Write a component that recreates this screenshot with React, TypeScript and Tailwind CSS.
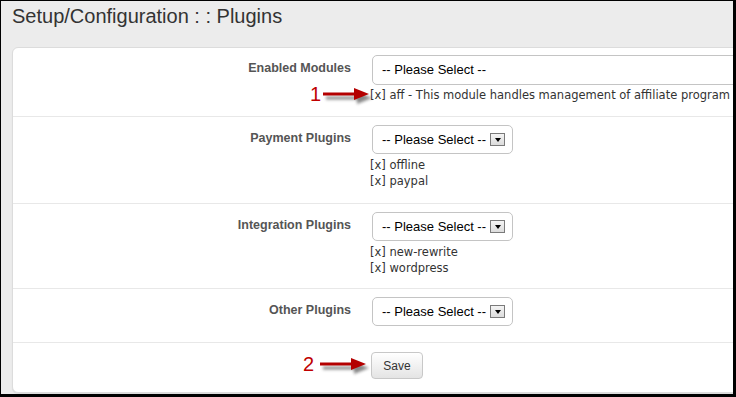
import React from 'react';

const Arrow: React.FC<{ className: string }> = ({ className }) => (
  <svg className={className} width="56" height="24" viewBox="0 0 56 24">
    <defs>
      <filter id="sh" x="-20%" y="-50%" width="160%" height="220%">
        <feGaussianBlur stdDeviation="1.6" />
      </filter>
    </defs>
    <g transform="translate(3,4)" fill="#555" opacity="0.7" filter="url(#sh)">
      <rect x="0" y="6.5" width="34" height="3" />
      <polygon points="31,2 46,8 31,14" />
    </g>
    <g fill="#b40000">
      <rect x="0" y="6.5" width="34" height="3" />
      <polygon points="31,2 46,8 31,14" />
    </g>
  </svg>
);

const DropBtn = () => (
  <span className="ml-[4px] flex h-[13px] w-[15px] items-center justify-center border border-[#7a7a7a] bg-gradient-to-b from-[#f4f4f4] to-[#dcdcdc]">
    <span className="h-0 w-0 border-x-[3.5px] border-t-[4px] border-x-transparent border-t-black" />
  </span>
);

const Select = ({ wide }: { wide?: boolean }) => (
  <div
    className={`flex items-center rounded-[5px] border border-[#c4c4c4] bg-white pl-[9px] text-[13px] text-black ${
      wide ? 'h-[30px] w-[420px]' : 'h-[29px] w-[141px]'
    }`}
  >
    <span>-- Please Select --</span>
    {!wide && <DropBtn />}
  </div>
);

const Label = ({ text }: { text: string }) => (
  <div className="mt-[5px] w-[338px] shrink-0 text-right text-[12.5px] font-bold leading-4 text-[#555]">{text}</div>
);

const Notes = ({ items, mt }: { items: string[]; mt: string }) => (
  <div className={`${mt} -ml-[2px] font-['DejaVu_Sans',sans-serif] text-[11.5px] leading-4 text-[#333]`}>
    {items.map((t) => (
      <div key={t}>[x] {t}</div>
    ))}
  </div>
);

export default function App() {
  return (
    <div className="relative h-[397px] w-[736px] overflow-hidden border-b-[3px] border-l border-r-[3px] border-t border-black bg-[#ececec] font-['Liberation_Sans',Arial,sans-serif]">
      <div className="pl-[11px] pt-[3px] text-[20px] leading-6 text-[#333]">Setup/Configuration : : Plugins</div>

      <div className="ml-[11px] mt-[19px] w-[800px] rounded-l-[6px] border border-[#dcdcdc] bg-white shadow-[0_1px_1px_rgba(0,0,0,0.08)]">
        <div className="flex border-b border-[#e8e8e8] pb-[13px] pt-[7px]">
          <Label text="Enabled Modules" />
          <div className="ml-[21px]">
            <Select wide />
            <Notes mt="mt-[2px]" items={['aff - This module handles management of affiliate program']} />
          </div>
        </div>

        <div className="flex border-b border-[#e8e8e8] pb-[14px] pt-[8px]">
          <Label text="Payment Plugins" />
          <div className="ml-[21px]">
            <Select />
            <Notes mt="mt-[3px]" items={['offline', 'paypal']} />
          </div>
        </div>

        <div className="flex border-b border-[#e8e8e8] pb-[12px] pt-[8px]">
          <Label text="Integration Plugins" />
          <div className="ml-[21px]">
            <Select />
            <Notes mt="mt-[3px]" items={['new-rewrite', 'wordpress']} />
          </div>
        </div>

        <div className="flex border-b border-[#e8e8e8] pb-[16px] pt-[8px]">
          <Label text="Other Plugins" />
          <div className="ml-[21px]">
            <Select />
          </div>
        </div>

        <div className="flex pb-[13px] pt-[9px]">
          <div className="w-[338px] shrink-0" />
          <button className="ml-[20px] h-[27px] w-[52px] rounded-[4px] border border-[#c8c8c8] bg-gradient-to-b from-white to-[#e4e4e4] text-[12px] text-[#333]">
            Save
          </button>
        </div>
      </div>

      {/* annotations */}
      <div className="absolute left-[309px] top-[81px] text-[20px] leading-6 text-[#c00000]">1</div>
      <Arrow className="absolute left-[322px] top-[85px]" />
      <div className="absolute left-[302px] top-[351px] text-[20px] leading-6 text-[#c00000]">2</div>
      <Arrow className="absolute left-[319px] top-[355px]" />
    </div>
  );
}
